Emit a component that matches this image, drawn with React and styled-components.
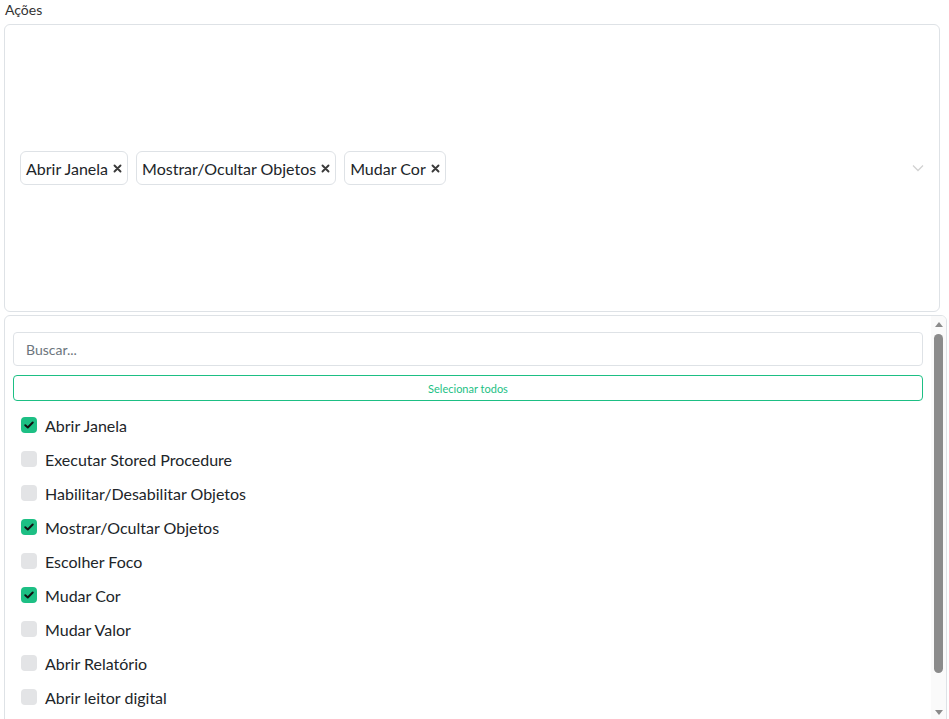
import React from 'react'
import styled, { createGlobalStyle } from 'styled-components'

const GlobalStyle = createGlobalStyle`
  html, body {
    margin: 0;
    padding: 0;
    background: #ffffff;
    font-family: Lato, "Noto Sans", sans-serif;
    color: #212529;
  }
  * { box-sizing: border-box; }
`

const actions = [
  { label: 'Abrir Janela', checked: true },
  { label: 'Executar Stored Procedure', checked: false },
  { label: 'Habilitar/Desabilitar Objetos', checked: false },
  { label: 'Mostrar/Ocultar Objetos', checked: true },
  { label: 'Escolher Foco', checked: false },
  { label: 'Mudar Cor', checked: true },
  { label: 'Mudar Valor', checked: false },
  { label: 'Abrir Relatório', checked: false },
  { label: 'Abrir leitor digital', checked: false },
]

const App = () => {
  const selected = actions.filter(a => a.checked)
  return (
    <Page>
      <GlobalStyle />
      <Label>Ações</Label>
      <SelectBox>
        <Chips>
          {selected.map(a => (
            <Chip key={a.label}>
              {a.label}
              <svg width="9" height="9" viewBox="0 0 9 9">
                <path d="M1.5 1.5 L7.5 7.5 M7.5 1.5 L1.5 7.5" stroke="#3a3a3a" strokeWidth="1.9" strokeLinecap="round" />
              </svg>
            </Chip>
          ))}
        </Chips>
        <Chevron viewBox="0 0 12 8">
          <path d="M1 1.5 L6 6.5 L11 1.5" fill="none" stroke="#d2d2d2" strokeWidth="1.3" />
        </Chevron>
      </SelectBox>
      <Panel>
        <Content>
          <Search placeholder="Buscar..." />
          <SelectAll>Selecionar todos</SelectAll>
          <List>
            {actions.map(a => (
              <Item key={a.label}>
                <Box checked={a.checked}>
                  {a.checked && (
                    <svg width="10" height="8" viewBox="0 0 10 8">
                      <path d="M1.3 4.2 L3.8 6.5 L8.7 1.5" fill="none" stroke="#111" strokeWidth="2" strokeLinecap="round" strokeLinejoin="round" />
                    </svg>
                  )}
                </Box>
                {a.label}
              </Item>
            ))}
          </List>
        </Content>
        <ScrollTrack>
          <ScrollButton>
            <Arrow up />
          </ScrollButton>
          <Thumb />
          <ScrollButton end>
            <Arrow />
          </ScrollButton>
        </ScrollTrack>
      </Panel>
    </Page>
  )
}

const Page = styled.div`
  height: 719px;
  padding: 0 2px 0 4px;
  display: flex;
  flex-direction: column;
  overflow: hidden;
`

const Label = styled.div`
  font-size: 14px;
  line-height: 20px;
  color: #333;
  padding-left: 1px;
`

const SelectBox = styled.div`
  margin-top: 4px;
  height: 288px;
  width: 936px;
  flex-shrink: 0;
  border: 1px solid #dee2e6;
  border-radius: 6px;
  display: flex;
  align-items: center;
  padding: 0 15px;
`

const Chips = styled.div`
  flex: 1;
  display: flex;
  gap: 8px;
`

const Chip = styled.div`
  height: 34px;
  display: flex;
  align-items: center;
  gap: 5px;
  padding: 0 5px 0 5px;
  border: 1px solid #dee2e6;
  border-radius: 6px;
  font-size: 16px;
  color: #212529;
`

const Chevron = styled.svg`
  width: 12px;
  height: 8px;
`

const Panel = styled.div`
  margin-top: 3px;
  height: 406px;
  flex-shrink: 0;
  border: 1px solid #dee2e6;
  border-radius: 6px 6px 0 0;
  display: flex;
  overflow: hidden;
`

const Content = styled.div`
  flex: 1;
  min-width: 0;
  padding: 16px 8px 0 8px;
  overflow: hidden;
`

const ScrollTrack = styled.div`
  width: 15px;
  background: #fafafa;
  display: flex;
  flex-direction: column;
  align-items: center;
`

const ScrollButton = styled.div`
  height: ${p => (p.end ? '16px' : '17px')};
  margin-top: ${p => (p.end ? 'auto' : '0')};
  width: 100%;
  display: flex;
  align-items: center;
  justify-content: center;
`

const Arrow = styled.span`
  width: 0;
  height: 0;
  border-left: 4px solid transparent;
  border-right: 4px solid transparent;
  ${p => (p.up ? 'border-bottom: 5px solid #8b8b8b;' : 'border-top: 5px solid #8b8b8b;')}
`

const Thumb = styled.div`
  margin-top: 1px;
  width: 9px;
  height: 339px;
  border-radius: 5px;
  background: #8b8b8b;
`

const Search = styled.input`
  display: block;
  width: 100%;
  height: 34px;
  border: 1px solid #dee2e6;
  border-radius: 4px;
  padding: 0 12px;
  font-family: inherit;
  font-size: 14px;
  outline: none;
  &::placeholder {
    color: #6c757d;
  }
`

const SelectAll = styled.button`
  display: block;
  width: 100%;
  height: 26px;
  margin-top: 9px;
  background: #fff;
  border: 1px solid #1dbf84;
  border-radius: 4px;
  color: #1dbf84;
  font-family: inherit;
  font-size: 11px;
  cursor: pointer;
`

const List = styled.div`
  margin-top: 7px;
  display: flex;
  flex-direction: column;
`

const Item = styled.label`
  height: 34px;
  display: flex;
  align-items: center;
  gap: 8px;
  padding-left: 8px;
  font-size: 16px;
  color: #212529;
`

const Box = styled.span`
  width: 16px;
  height: 16px;
  border-radius: 4px;
  background: ${p => (p.checked ? '#1dbf84' : '#e3e4e6')};
  display: flex;
  align-items: center;
  justify-content: center;
`

export default App
